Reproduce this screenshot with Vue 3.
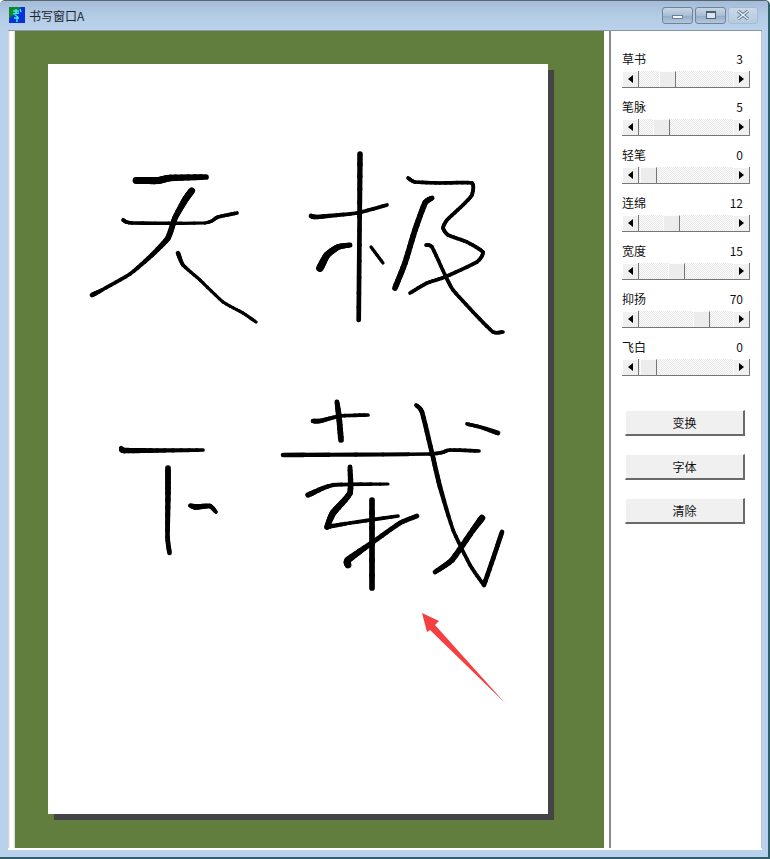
<script setup>
const sliders = [
  { label: '草书', value: 3, thumb: 20 },
  { label: '笔脉', value: 5, thumb: 14 },
  { label: '轻笔', value: 0, thumb: 1 },
  { label: '连绵', value: 12, thumb: 24 },
  { label: '宽度', value: 15, thumb: 29 },
  { label: '抑扬', value: 70, thumb: 54 },
  { label: '飞白', value: 0, thumb: 1 },
]
const buttons = ['变换', '字体', '清除']

// Each stroke: points of x, y, pen width, in window coordinates
const strokes = [
  // 天
  [[136,180.5,6],[158,180.5,6.5],[170,178,6],[206,177,5]],
  [[191.7,190.7,6],[185,200,6],[175,218,5],[168,238,5],[152,255,4],[130,274,3],[102,290,3],[92,295,4]],
  [[123,220,3],[132,223,3],[205,223,2.5],[218,217,3],[237,213,3]],
  [[178,253,4],[183,265,3],[200,280,2.5],[223,302,2.5],[243,313,2.5],[256,322,2.5]],
  // 极
  [[360,154,5],[359.5,230,4],[358.7,320,4]],
  [[311,216,4],[317,217,4],[357,213,3],[387,205,3]],
  [[350,245,4],[338,247,5],[327,255,6],[320,268,7]],
  [[371,247,2.5],[383,263,2.5]],
  [[432,198,4],[425,203,5],[415,230,5],[405,263,5],[395,288,5]],
  [[408,178,3],[415,182,3],[440,183,3],[472,183,3],[472,195,3],[463,205,3],[447,220,3],[443,228,3],[448,235,3],[467,242,3],[483,252,3],[477,262,3],[445,277,3],[427,283,3],[410,293,3]],
  [[426,245,3],[432,247,3],[445,275,3],[453,290,3],[473,312,3],[493,332,3],[503,332,3]],
  // 下
  [[121,448,3],[124,450.5,5],[157,450.5,4],[203,450,3]],
  [[168,468,5],[168,493,5],[167.5,537,4],[169.5,553,4]],
  [[190,505.5,3],[196,507,5],[210,506,4],[216,512,3]],
  // 載
  [[313,421,4],[320,421,4],[340,416,3],[368,415,3]],
  [[337,402,4],[339,417,5],[341,440,5]],
  [[283,455,4],[430,454,3],[450,450,3],[479,451,3]],
  [[416,405,3],[422,412,4],[432,453,4],[440,487,4],[453,530,3],[470,565,3],[483,584,3]],
  [[502,532,4],[495,553,4],[484,585,4]],
  [[467,424,3],[480,427,3],[498,433,4]],
  [[482,518,6],[473,530,5],[452,560,5],[435,572,4]],
  [[308,495,5],[333,485,3.5],[388,484,2.5]],
  [[350,467,4],[350,493,5],[333,513,6],[327,527,5]],
  [[327,527,4],[350,523,3],[398,516,3]],
  [[372,500,5],[372,588,5]],
  [[417,516,4],[400,523,4],[373,542,4],[348,560,6],[348,565,6]],
]

// Soften each pen stroke: half straight line, half Catmull-Rom curve
function smooth(p0, p1, p2, p3, t) {
  const t2 = t * t
  const t3 = t2 * t
  const curve = 0.5 * (2 * p1 + (p2 - p0) * t + (2 * p0 - 5 * p1 + 4 * p2 - p3) * t2 + (3 * p1 - p0 - 3 * p2 + p3) * t3)
  const straight = p1 + (p2 - p1) * t
  return (curve + straight) / 2
}
const segments = []
strokes.forEach((s) => {
  for (let i = 1; i < s.length; i++) {
    const p0 = s[Math.max(i - 2, 0)]
    const p1 = s[i - 1]
    const p2 = s[i]
    const p3 = s[Math.min(i + 1, s.length - 1)]
    let prev = p1
    for (let k = 1; k <= 6; k++) {
      const t = k / 6
      const x = smooth(p0[0], p1[0], p2[0], p3[0], t)
      const y = smooth(p0[1], p1[1], p2[1], p3[1], t)
      const w = p1[2] + (p2[2] - p1[2]) * t + 0.7
      segments.push({ x1: prev[0], y1: prev[1], x2: x, y2: y, w })
      prev = [x, y]
    }
  }
})
</script>

<template>
  <div class="window">
    <header class="titlebar">
      <svg class="app-icon" viewBox="0 0 16 16" width="16" height="16">
        <rect width="16" height="16" fill="#0a30d8" />
        <path d="M0 0H12L0 12Z" fill="#0a8a2a" />
        <path d="M4 4H10M7 2V7M4 7L10 6M6 8L9 10M5 11H10M8 10V15M11 2L12 5" stroke="#3ff0e0" stroke-width="1.4" fill="none" />
      </svg>
      <span class="title">书写窗口A</span>
      <div class="controls">
        <div class="ctl">
          <span class="min-glyph"></span>
        </div>
        <div class="ctl">
          <span class="max-glyph"></span>
        </div>
        <div class="ctl close">
          <svg viewBox="0 0 14 10" width="14" height="10">
            <path d="M2 1L12 9M12 1L2 9" stroke="#66788c" stroke-width="3.4" fill="none" />
            <path d="M2 1L12 9M12 1L2 9" stroke="#e8eef5" stroke-width="1.6" fill="none" />
          </svg>
        </div>
      </div>
    </header>
    <main class="client">
      <div class="gutter"></div>
      <section class="desk">
        <div class="paper"></div>
        <svg class="ink" viewBox="15 31 589 817" width="589" height="817">
          <line
            v-for="(s, i) in segments"
            :key="i"
            :x1="s.x1"
            :y1="s.y1"
            :x2="s.x2"
            :y2="s.y2"
            :stroke-width="s.w"
            stroke="#000"
            stroke-linecap="round"
          />
          <polygon points="422,613 439,621 435,625 505,703 430,630 427,632" fill="#f44040" />
        </svg>
      </section>
      <div class="splitter"></div>
      <aside class="panel">
        <div v-for="s in sliders" :key="s.label" class="slider">
          <div class="slider-head">
            <span>{{ s.label }}</span>
            <span>{{ s.value }}</span>
          </div>
          <div class="scrollbar">
            <div class="arrow-btn">
              <span class="tri-left"></span>
            </div>
            <div class="track">
              <div class="thumb" :style="{ left: s.thumb + 'px' }"></div>
            </div>
            <div class="arrow-btn">
              <span class="tri-right"></span>
            </div>
          </div>
        </div>
        <div class="actions">
          <div v-for="b in buttons" :key="b" class="action">{{ b }}</div>
        </div>
      </aside>
    </main>
  </div>
</template>

<style scoped>
.window {
  width: 770px;
  height: 859px;
  box-sizing: border-box;
  display: flex;
  flex-direction: column;
  background: #b9d1ea;
  border-top: 1px solid #5a6470;
  border-right: 2px solid #2f5f68;
  border-bottom: 2px solid #2f5f68;
  border-radius: 5px 5px 0 0;
  font-family: "Noto Sans CJK SC", "Liberation Sans", sans-serif;
  font-size: 12px;
  color: #111;
  overflow: hidden;
}
.titlebar {
  height: 29px;
  flex: none;
  display: flex;
  align-items: center;
  padding: 0 10px 1px 9px;
  box-sizing: border-box;
  background: linear-gradient(180deg, #a3bcd8 0%, #b4cbe4 50%, #bad2ec 100%);
}
.app-icon {
  flex: none;
}
.title {
  margin-left: 4px;
  color: #1c2530;
}
.controls {
  margin-left: auto;
  display: flex;
  gap: 2px;
}
.ctl {
  width: 31px;
  height: 17px;
  box-sizing: border-box;
  border: 1px solid #6f8499;
  border-radius: 3px;
  background: linear-gradient(180deg, #c6d6e7 0%, #a9bed4 50%, #94adc6 55%, #b3c8dc 100%);
  display: flex;
  align-items: center;
  justify-content: center;
}
.ctl.close {
  width: 30px;
  border-color: #a6bbd0;
  background: linear-gradient(180deg, #c8d9ea 0%, #b5cade 100%);
}
.min-glyph {
  width: 11px;
  height: 4px;
  margin-top: 4px;
  box-sizing: border-box;
  border: 1px solid #6d7f92;
  background: #f2f6fa;
}
.max-glyph {
  width: 10px;
  height: 8px;
  box-sizing: border-box;
  border: 1px solid #4e5f70;
  border-top-width: 2px;
  background: #dbe5ef;
}
.client {
  flex: 1;
  min-height: 0;
  display: flex;
  margin: 0 6px 7px 8px;
  padding-bottom: 2px;
  background: #fff;
  border-top: 1px solid #8a98a6;
}
.gutter {
  width: 7px;
  flex: none;
  background: linear-gradient(90deg, #c8c8c8, #fff 30%, #fff 70%, #d8d8d8);
}
.desk {
  width: 589px;
  flex: none;
  position: relative;
  background: #617e3f;
  box-sizing: border-box;
  padding: 33px 0 0 33px;
}
.paper {
  width: 500px;
  height: 750px;
  background: #fff;
  box-shadow: 6px 6px 0 #444;
}
.ink {
  position: absolute;
  left: 0;
  top: 0;
}
.splitter {
  width: 7px;
  flex: none;
  box-sizing: border-box;
  background: #fff;
  border-right: 2px solid #8a8a8a;
}
.panel {
  flex: 1;
  box-sizing: border-box;
  padding: 19px 0 0 11px;
  border-right: 1px solid #c4c4c4;
  background: #fff;
}
.slider {
  width: 128px;
  margin-bottom: 10px;
}
.slider-head {
  height: 21px;
  box-sizing: border-box;
  padding: 0 7px 3px 0;
  line-height: 18px;
  display: flex;
  justify-content: space-between;
}
.scrollbar {
  height: 17px;
  display: flex;
  border-bottom: 1px solid #777;
  box-sizing: border-box;
}
.arrow-btn {
  width: 17px;
  flex: none;
  box-sizing: border-box;
  background: #f0f0f0;
  border-right: 1px solid #777;
  box-shadow: inset 1px 1px 0 #fff;
  display: flex;
  align-items: center;
  justify-content: center;
}
.tri-left {
  border: 4px solid transparent;
  border-left: 0;
  border-right: 5px solid #000;
}
.tri-right {
  border: 4px solid transparent;
  border-right: 0;
  border-left: 5px solid #000;
}
.track {
  flex: 1;
  position: relative;
  background: repeating-conic-gradient(#fff 0 25%, #e6e6e6 0 50%) 0 0 / 2px 2px;
}
.thumb {
  position: absolute;
  top: 0;
  bottom: 0;
  width: 17px;
  box-sizing: border-box;
  background: #ececec;
  border-left: 1px solid #fbfbfb;
  border-top: 1px solid #fbfbfb;
  border-right: 1px solid #777;
}
.actions {
  margin-top: 34px;
  margin-left: 3px;
  display: flex;
  flex-direction: column;
  gap: 18px;
}
.action {
  width: 120px;
  height: 26px;
  box-sizing: border-box;
  background: #f0f0f0;
  border-top: 1px solid #fff;
  border-left: 1px solid #fff;
  border-right: 2px solid #696969;
  border-bottom: 2px solid #696969;
  display: flex;
  align-items: center;
  justify-content: center;
}
</style>

<style>
html, body {
  margin: 0;
  background: #fff;
}
</style>
